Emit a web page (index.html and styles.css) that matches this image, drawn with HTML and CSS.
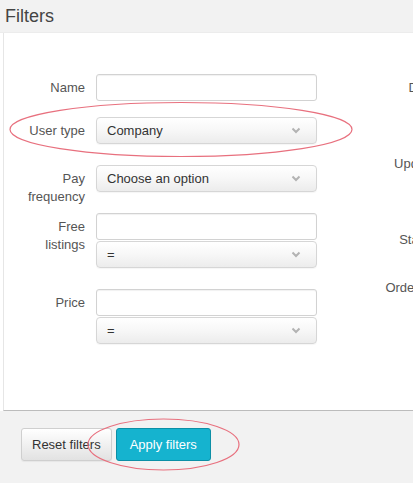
FILE: index.html
```html
<!DOCTYPE html>
<html lang="en">
<head>
<meta charset="utf-8">
<title>Filters</title>
<link rel="stylesheet" href="styles.css">
</head>
<body>
<header class="title-bar"><h1 class="title">Filters</h1></header>
<div class="panel">
  <form class="filters">
    <div class="col">
      <div class="row row-compact">
        <label class="lbl">Name</label>
        <div class="ctrls"><div class="input"></div></div>
      </div>
      <div class="row">
        <label class="lbl">User type</label>
        <div class="ctrls">
          <div class="select"><span>Company</span><svg class="chev" width="10" height="7" viewBox="0 0 10 7"><path d="M1.5 1.5 L5 5 L8.5 1.5" fill="none" stroke="#b3b3b3" stroke-width="2"/></svg></div>
        </div>
      </div>
      <div class="row">
        <label class="lbl">Pay<br>frequency</label>
        <div class="ctrls">
          <div class="select"><span>Choose an option</span><svg class="chev" width="10" height="7" viewBox="0 0 10 7"><path d="M1.5 1.5 L5 5 L8.5 1.5" fill="none" stroke="#b3b3b3" stroke-width="2"/></svg></div>
        </div>
      </div>
      <div class="row">
        <label class="lbl">Free<br>listings</label>
        <div class="ctrls">
          <div class="input"></div>
          <div class="select"><span>=</span><svg class="chev" width="10" height="7" viewBox="0 0 10 7"><path d="M1.5 1.5 L5 5 L8.5 1.5" fill="none" stroke="#b3b3b3" stroke-width="2"/></svg></div>
        </div>
      </div>
      <div class="row">
        <label class="lbl">Price</label>
        <div class="ctrls">
          <div class="input"></div>
          <div class="select"><span>=</span><svg class="chev" width="10" height="7" viewBox="0 0 10 7"><path d="M1.5 1.5 L5 5 L8.5 1.5" fill="none" stroke="#b3b3b3" stroke-width="2"/></svg></div>
        </div>
      </div>
    </div>
    <div class="col">
      <div class="row">
        <label class="lbl">Date</label>
        <div class="ctrls"><div class="input"></div><div class="input"></div></div>
      </div>
      <div class="row">
        <label class="lbl">Update</label>
        <div class="ctrls"><div class="input"></div><div class="input"></div></div>
      </div>
      <div class="row">
        <label class="lbl">Status</label>
        <div class="ctrls"><div class="select"><span></span></div></div>
      </div>
      <div class="row">
        <label class="lbl">Order by</label>
        <div class="ctrls"><div class="select"><span></span></div></div>
      </div>
    </div>
  </form>
</div>
<footer class="actions">
  <button class="btn btn-default" type="button">Reset filters</button>
  <button class="btn btn-info" type="button">Apply filters</button>
</footer>
<svg class="annot" width="413" height="483" viewBox="0 0 413 483">
  <ellipse cx="181" cy="129.5" rx="171" ry="27" fill="none" stroke="#e8707e" stroke-width="1.2"/>
  <ellipse cx="163.5" cy="444.5" rx="75.5" ry="25.5" fill="none" stroke="#e8707e" stroke-width="1.2"/>
</svg>
</body>
</html>
```

FILE: styles.css
```css
html, body {
  margin: 0;
  padding: 0;
}
body {
  width: 413px;
  height: 483px;
  overflow: hidden;
  position: relative;
  background: #ffffff;
  font-family: "Liberation Sans", Arial, sans-serif;
  font-size: 13px;
  color: #333333;
}
.title-bar {
  height: 32px;
  background: #f2f2f2;
  border-bottom: 1px solid #ececec;
  padding-left: 5px;
}
.title {
  margin: 0;
  font-weight: normal;
  font-size: 18px;
  line-height: 32px;
  color: #444444;
}
.panel {
  margin-left: 3px;
  border-left: 1px solid #e6e6e6;
  border-bottom: 1px solid #bcbcbc;
  background: #ffffff;
  padding-top: 41px;
  box-sizing: border-box;
  height: 378px;
}
.filters {
  display: flex;
  gap: 38px;
  width: 800px;
}
.col {
  display: flex;
  flex-direction: column;
  gap: 21px;
}
.row {
  display: grid;
  grid-template-columns: 81px 221px;
  column-gap: 11px;
  align-items: start;
}
.row-compact {
  margin-bottom: -5px;
}
.lbl {
  text-align: right;
  font-size: 13px;
  line-height: 18px;
  padding-top: 5px;
  height: 27px;
  box-sizing: border-box;
  overflow: visible;
  color: #555555;
}
.ctrls {
  display: flex;
  flex-direction: column;
  gap: 1px;
}
.input {
  height: 27px;
  box-sizing: border-box;
  border: 1px solid #d2d2d2;
  border-radius: 3px;
  background: #ffffff;
  box-shadow: inset 0 1px 1px rgba(0,0,0,0.06);
}
.select {
  height: 27px;
  box-sizing: border-box;
  border: 1px solid #d6d6d6;
  border-radius: 4px;
  background: linear-gradient(#ffffff 0%, #f7f7f7 50%, #ececec 100%);
  box-shadow: 0 1px 1px rgba(0,0,0,0.04);
  display: flex;
  align-items: center;
  padding: 0 15px 0 10px;
  line-height: 25px;
  color: #333333;
}
.select span {
  flex: 1;
}
.chev {
  display: block;
}
.actions {
  height: 72px;
  background: #f2f2f2;
  display: flex;
  align-items: flex-start;
  gap: 4px;
  padding: 17px 0 0 21px;
  box-sizing: border-box;
}
.btn {
  height: 33px;
  font-family: "Liberation Sans", Arial, sans-serif;
  font-size: 13px;
  border-radius: 3px;
  margin: 0;
  cursor: pointer;
}
.btn-default {
  padding: 0 10px;
  color: #333333;
  background: linear-gradient(#ffffff, #e2e2e2);
  border: 1px solid #cfcfcf;
  box-shadow: 0 1px 1px rgba(0,0,0,0.05);
}
.btn-info {
  padding: 0 13px;
  color: #ffffff;
  background: #15b3cf;
  border: 1px solid #0c8fa6;
}
.annot {
  position: absolute;
  left: 0;
  top: 0;
  pointer-events: none;
}
```
